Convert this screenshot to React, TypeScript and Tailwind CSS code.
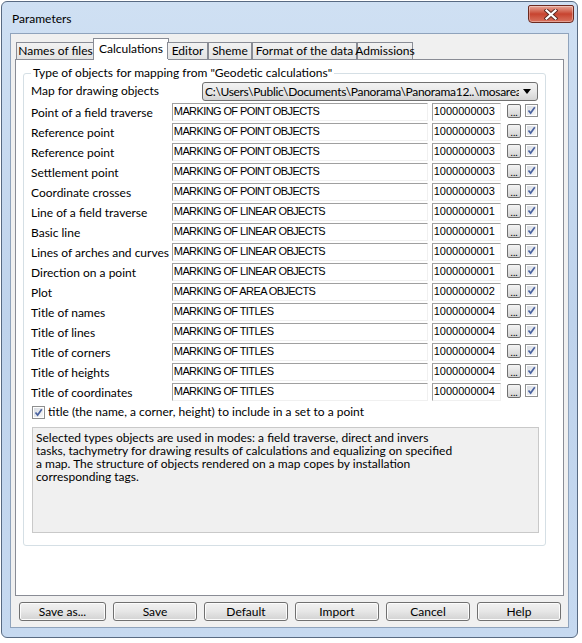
import type { ReactNode } from 'react';

const ui = "font-['Lato',sans-serif]";
const mono = "font-['Liberation_Sans',Arial,sans-serif]";

const rows: [string, string, string][] = [
  ['Point of a field traverse', 'MARKING OF POINT OBJECTS', '1000000003'],
  ['Reference point', 'MARKING OF POINT OBJECTS', '1000000003'],
  ['Reference point', 'MARKING OF POINT OBJECTS', '1000000003'],
  ['Settlement point', 'MARKING OF POINT OBJECTS', '1000000003'],
  ['Coordinate crosses', 'MARKING OF POINT OBJECTS', '1000000003'],
  ['Line of a field traverse', 'MARKING OF LINEAR OBJECTS', '1000000001'],
  ['Basic line', 'MARKING OF LINEAR OBJECTS', '1000000001'],
  ['Lines of arches and curves', 'MARKING OF LINEAR OBJECTS', '1000000001'],
  ['Direction on a point', 'MARKING OF LINEAR OBJECTS', '1000000001'],
  ['Plot', 'MARKING OF AREA OBJECTS', '1000000002'],
  ['Title of names', 'MARKING OF TITLES', '1000000004'],
  ['Title of lines', 'MARKING OF TITLES', '1000000004'],
  ['Title of corners', 'MARKING OF TITLES', '1000000004'],
  ['Title of heights', 'MARKING OF TITLES', '1000000004'],
  ['Title of coordinates', 'MARKING OF TITLES', '1000000004'],
];

const tabs = ['Names of files', 'Calculations', 'Editor', 'Sheme', 'Format of the data', 'Admissions'];
const tabWidths = ['w-[79px]', 'w-[76px]', 'w-[41px]', 'w-[44px]', 'w-[105px]', 'w-[56px]'];

function Check() {
  return (
    <div className="w-[13px] h-[13px] border border-[#8e8f8f] bg-white p-px shrink-0">
      <div className="w-full h-full bg-gradient-to-br from-[#d9dde3] to-[#f7f7f7] flex items-center justify-center">
        <svg width="9" height="9" viewBox="0 0 9 9">
          <path d="M1.5 4.5 L3.6 7 L7.8 1.2" fill="none" stroke="#4a62a0" strokeWidth="1.7" />
        </svg>
      </div>
    </div>
  );
}

function Btn({ children, className = '' }: { children: ReactNode; className?: string }) {
  return (
    <div className={`h-[19px] border border-[#707070] rounded-[3px] bg-gradient-to-b from-[#f2f2f2] via-[#e6e6e6] to-[#d2d2d2] flex items-center justify-center text-[12px] text-black shadow-[inset_0_0_0_1px_#fcfcfc] ${className}`}>
      {children}
    </div>
  );
}

export default function App() {
  return (
    <div className={`w-[582px] h-[643px] bg-white overflow-hidden ${ui} text-[12px] text-black`}>
      <div className="ml-px mt-px w-[577px] h-[637px] border border-[#586a82] rounded-[6px] bg-gradient-to-b from-[#cfe0f3] via-[#bfd3ec] to-[#c6d9f0] flex flex-col">
        {/* Title bar */}
        <div className="h-[31px] flex items-start">
          <span className="pl-[10px] pt-[8px] leading-[18px]">Parameters</span>
          <div className="ml-auto mr-[3px] mt-[3px] w-[46px] h-[18px] border border-[#6b2a20] rounded-b-[4px] rounded-t-[2px] bg-gradient-to-b from-[#e6a597] via-[#c7432f] to-[#d8725e] flex items-center justify-center shadow-[inset_0_0_0_1px_rgba(255,255,255,0.35)]">
            <svg width="14" height="11" viewBox="0 0 14 11">
              <path d="M2.5 1.5 L11.5 9.5 M11.5 1.5 L2.5 9.5" stroke="#5a2a22" strokeWidth="4" strokeLinecap="square" />
              <path d="M2.5 1.5 L11.5 9.5 M11.5 1.5 L2.5 9.5" stroke="#ffffff" strokeWidth="2.2" strokeLinecap="square" />
            </svg>
          </div>
        </div>

        {/* Client */}
        <div className="mx-[8px] h-[595px] border border-[#8fa3bc] bg-[#f0f0f0] flex flex-col">
          <div className="ml-[4px] mr-[4px] mt-[4px]">
            {/* Tabs */}
            <div className="flex items-end h-[22px] relative z-10 -mb-px pl-px whitespace-nowrap">
              {tabs.map((t, i) =>
                i === 1 ? (
                  <div key={t} className={`${tabWidths[i]} -mx-[2px] h-[22px] bg-white border border-b-0 border-[#898c95] flex items-start justify-center pt-[1px] leading-[17px]`}>
                    {t}
                  </div>
                ) : (
                  <div key={t} className={`${tabWidths[i]} h-[17px] mb-px bg-gradient-to-b from-[#f2f2f2] to-[#e3e3e3] border border-b-0 border-[#898c95] flex items-center justify-center leading-[16px]`}>
                    {t}
                  </div>
                )
              )}
            </div>

            {/* Panel */}
            <div className="h-[537px] bg-white border border-[#898c95] pl-[7px] pt-[13px]">
              <div className="relative w-[523px] h-[473px] border border-[#d5dfe5] rounded-[3px] px-[7px]">
                <span className="absolute left-[7px] -top-[9px] bg-white px-[2px] leading-[16px] whitespace-nowrap">
                  Type of objects for mapping from "Geodetic calculations"
                </span>

                <div className="flex items-start h-[29px] pt-[8px]">
                  <span className="w-[174px] leading-[17px]">Map for drawing objects</span>
                  <div className="w-[336px] h-[19px] border border-[#707070] rounded-[3px] bg-gradient-to-b from-[#f2f2f2] via-[#e8e8e8] to-[#d4d4d4] flex items-center pl-[2px] pr-[6px]">
                    <span className="flex-1 overflow-hidden whitespace-nowrap leading-[16px] tracking-[-0.3px]">
                      C:\Users\Public\Documents\Panorama\Panorama12..\mosarea.sit
                    </span>
                    <svg width="8" height="5" viewBox="0 0 8 5" className="ml-[4px] shrink-0">
                      <path d="M0 0 L8 0 L4 5 Z" fill="#000" />
                    </svg>
                  </div>
                </div>

                {rows.map(([label, name, code], i) => (
                  <div key={i} className="flex items-start h-[20px]">
                    <span className="w-[142px] leading-[18px] pt-[1px] whitespace-nowrap">{label}</span>
                    <div className={`w-[258px] h-[18px] border border-[#a0a0a0] border-r-[#f0f0f0] border-b-[#f0f0f0] ${mono} text-[11px] tracking-[-0.6px] leading-[15px] pl-[1px] whitespace-nowrap overflow-hidden`}>
                      {name}
                    </div>
                    <div className={`ml-[4px] w-[70px] h-[18px] border border-[#a0a0a0] border-r-[#f0f0f0] border-b-[#f0f0f0] ${mono} text-[11px] leading-[15px] pl-[1px]`}>
                      {code}
                    </div>
                    <div className="ml-[6px] mt-[1px] w-[14px] h-[14px] border border-[#707070] rounded-[2px] bg-gradient-to-b from-[#f4f4f4] to-[#d3d3d3] flex items-end justify-center text-[10px] leading-[8px] pb-px">
                      ...
                    </div>
                    <div className="ml-[4px] mt-[1px]">
                      <Check />
                    </div>
                  </div>
                ))}

                <div className="flex items-center gap-[3px] mt-[1px] pl-px h-[16px]">
                  <Check />
                  <span className="leading-[16px]">title (the name, a corner, height) to include in a set to a point</span>
                </div>

                <div className="mt-[7px] ml-px w-[507px] h-[106px] bg-[#f0f0f0] border border-[#c9c9c9] pl-[3px] pt-[3px] leading-[13px]">
                  Selected types objects are used in modes: a field traverse, direct and invers
                  <br />
                  tasks, tachymetry for drawing results of calculations and equalizing on specified
                  <br />
                  a map. The structure of objects rendered on a map copes by installation
                  <br />
                  corresponding tags.
                </div>
              </div>
            </div>
          </div>

          {/* Buttons */}
          <div className="flex justify-between pl-[8px] pr-[7px] mt-[6px]">
            <Btn className="w-[87px]">Save as...</Btn>
            <Btn className="w-[84px]">Save</Btn>
            <Btn className="w-[84px]">Default</Btn>
            <Btn className="w-[84px]">Import</Btn>
            <Btn className="w-[84px]">Cancel</Btn>
            <Btn className="w-[84px]">Help</Btn>
          </div>
        </div>
      </div>
    </div>
  );
}
